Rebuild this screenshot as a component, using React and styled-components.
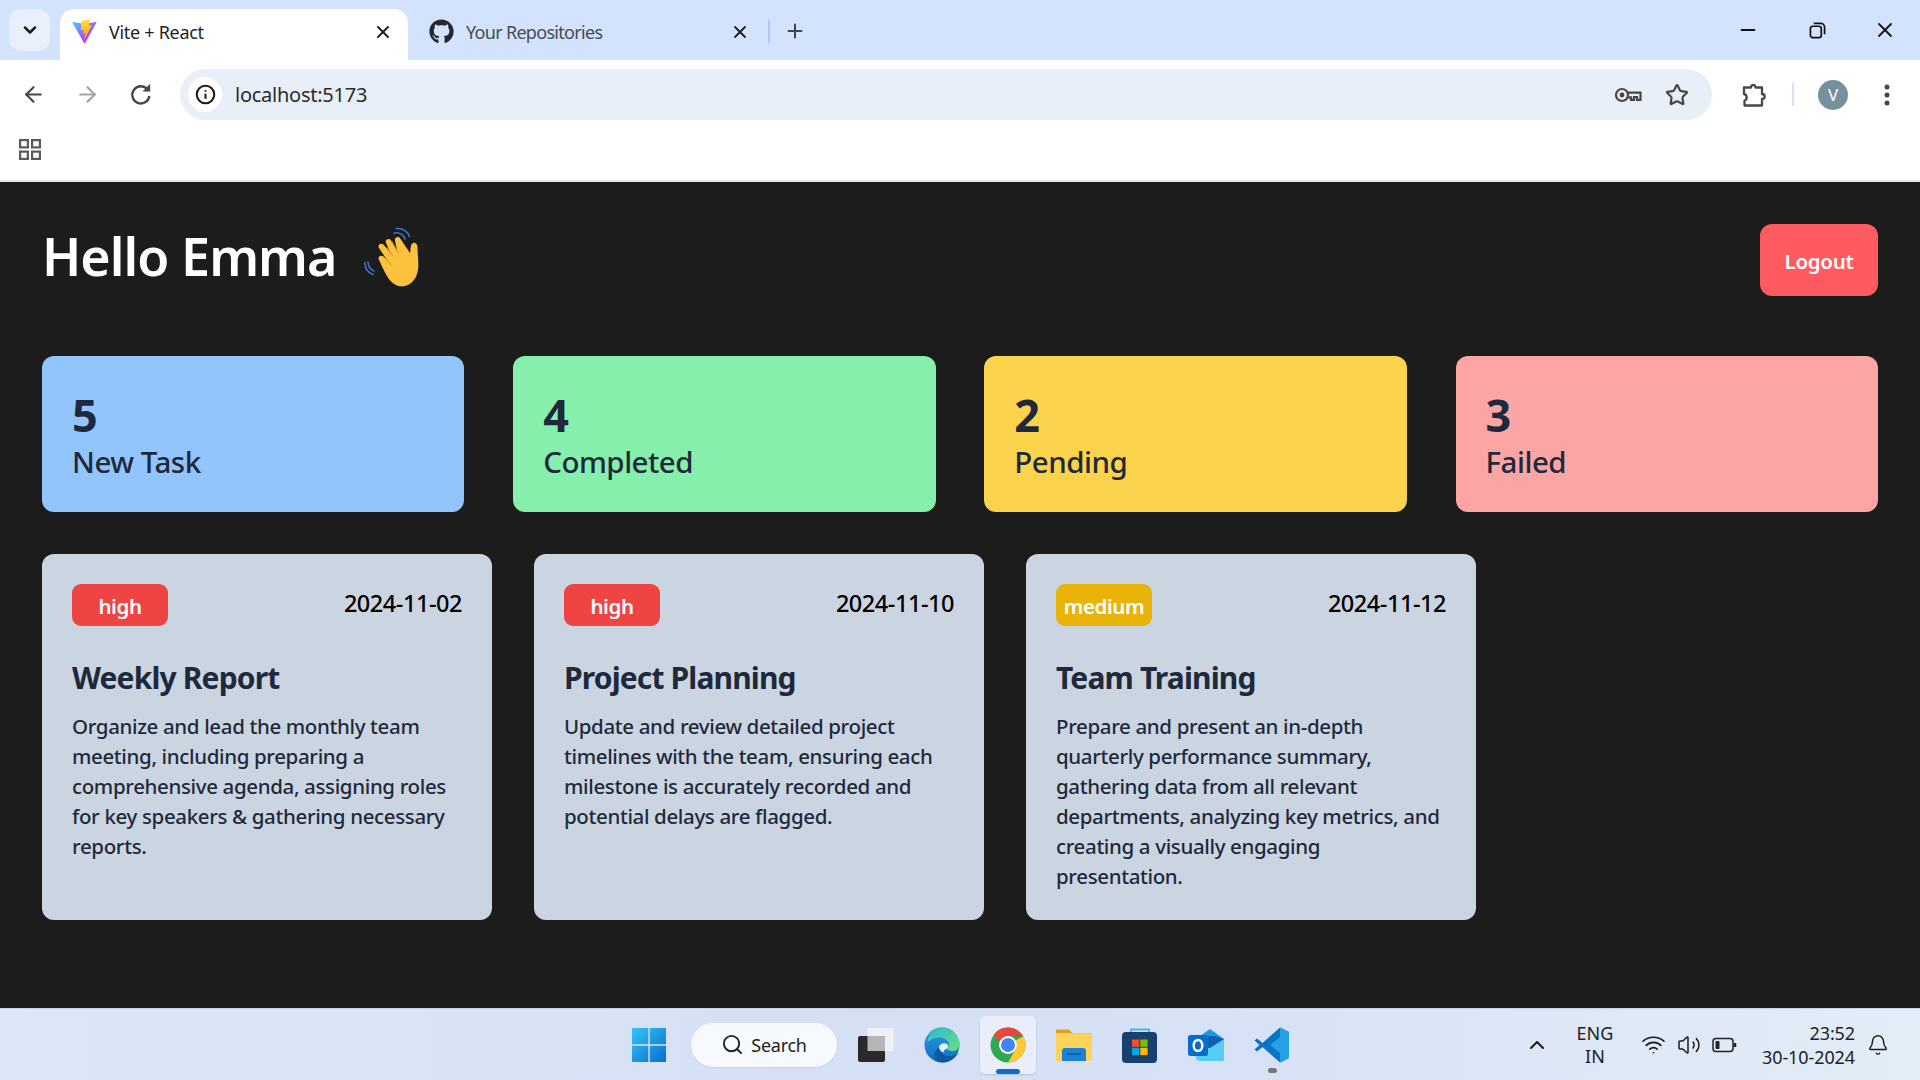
import React from 'react'
import styled, { createGlobalStyle } from 'styled-components'
import { FaGithub } from 'react-icons/fa'
import {
  ArrowLeft, ArrowRight, Info, Star, Plus, X, ChevronDown, ChevronUp,
  Minus, Search, Bell, Volume2, Wifi,
} from 'lucide-react'

const GlobalStyle = createGlobalStyle`
  html, body { margin: 0; padding: 0; height: 100%; }
  body { font-family: "Noto Sans", "Open Sans", sans-serif; overflow: hidden; }
  * { box-sizing: border-box; }
`

const Screen = styled.div`
  width: 1920px;
  height: 1080px;
  display: flex;
  flex-direction: column;
`

/* browser chrome */
const TabStrip = styled.div`
  height: 60px;
  flex: none;
  background: #d3e3fd;
  display: flex;
  align-items: flex-end;
  padding-left: 9px;
`
const TabMenu = styled.div`
  width: 41px;
  height: 42px;
  margin-bottom: 9px;
  margin-right: 10px;
  background: #e9f0fb;
  border-radius: 12px;
  display: flex;
  align-items: center;
  justify-content: center;
  color: #1f1f1f;
`
const Tab = styled.div`
  width: ${p => p.$w}px;
  height: 51px;
  padding: 0 ${p => p.$pr}px 6px ${p => p.$pl}px;
  display: flex;
  align-items: center;
  border-radius: 14px 14px 0 0;
  background: ${p => (p.$active ? '#fff' : 'transparent')};
  color: ${p => (p.$active ? '#1f1f1f' : '#474b50')};
  font-size: 18px;
  letter-spacing: ${p => (p.$active ? '-0.3px' : '-0.7px')};
  svg.close { margin-left: auto; color: #1f1f1f; flex: none; }
`
const TabTitle = styled.span`
  margin-left: 12px;
`
const TabDivider = styled.div`
  width: 2px;
  height: 23px;
  background: #a8c7fa;
  margin: 0 0 17px 0;
  align-self: flex-end;
`
const NewTab = styled.div`
  margin: 0 0 18px 14px;
  color: #444;
  display: flex;
`
const WindowButtons = styled.div`
  margin-left: auto;
  align-self: flex-start;
  display: flex;
  align-items: center;
  padding: 18px 23px 0 0;
  color: #111;
`
const WindowMin = styled.span`
  display: flex;
  margin-right: 50px;
`
const WindowRestore = styled.span`
  display: flex;
  margin-right: 47px;
`
const Toolbar = styled.div`
  height: 60px;
  flex: none;
  background: #fff;
  border-radius: 14px 14px 0 0;
  display: flex;
  align-items: center;
  color: #474747;
`
const NavIcons = styled.div`
  display: flex;
  gap: 29px;
  padding: 9px 0 0 21px;
  width: 180px;
`
const NavIcon = styled.span`
  display: flex;
  color: ${p => (p.$dim ? '#a0a3a6' : '#474747')};
`
const AddressBar = styled.div`
  width: 1532px;
  height: 51px;
  margin-top: 9px;
  border-radius: 26px;
  background: #e9eff9;
  display: flex;
  align-items: center;
  padding: 0 23px 0 8px;
`
const SiteInfo = styled.div`
  width: 34px;
  height: 35px;
  border-radius: 50%;
  background: #fff;
  display: flex;
  align-items: center;
  justify-content: center;
  color: #1f1f1f;
`
const Url = styled.span`
  margin-left: 13px;
  font-size: 20px;
  letter-spacing: -0.25px;
  color: #2b2b2b;
  margin-right: auto;
`
const AddressActions = styled.div`
  display: flex;
  align-items: center;
  gap: 23px;
  color: #474747;
`
const ToolbarEnd = styled.div`
  display: flex;
  align-items: center;
  flex: 1;
  padding-left: 29px;
  margin-top: 9px;
`
const ToolDivider = styled.div`
  width: 2px;
  height: 23px;
  margin: 0 24px 0 25px;
  background: #d3e3fd;
`
const Avatar = styled.div`
  width: 30px;
  height: 30px;
  border-radius: 50%;
  background: #78909c;
  color: #fff;
  font-size: 17px;
  display: flex;
  align-items: center;
  justify-content: center;
  margin-right: 36px;
`
const MenuDots = styled.svg`
  width: 6px;
  height: 22px;
  flex: none;
`
const Bookmarks = styled.div`
  height: 62px;
  flex: none;
  background: #fff;
  border-bottom: 2px solid #e3e3e3;
  padding: 19px 0 0 19px;
  display: flex;
  align-items: flex-start;
`

/* the app */
const Page = styled.main`
  flex: 1;
  min-height: 0;
  background: #1c1c1c;
  padding: 42px 42px 0;
`
const Header = styled.header`
  display: flex;
  align-items: flex-start;
  justify-content: space-between;
  height: 132px;
`
const Hello = styled.h1`
  margin: 0;
  color: #fff;
  font-size: 52px;
  line-height: 64px;
  font-weight: 600;
  letter-spacing: -0.95px;
  display: flex;
  align-items: center;
`
const Logout = styled.button`
  width: 118px;
  height: 72px;
  padding: 2px 0 0;
  border: 0;
  border-radius: 12px;
  background: #ff5a5f;
  color: #fff;
  font: 600 20.5px/70px "Noto Sans", sans-serif;
  letter-spacing: -0.3px;
`
const Stats = styled.section`
  display: grid;
  grid-template-columns: repeat(4, 1fr);
  column-gap: 48.7px;
`
const Stat = styled.div`
  height: 156px;
  border-radius: 12px;
  padding: 31px 30px 0;
  background: ${p => p.$bg};
  color: #1e293b;
`
const StatCount = styled.div`
  font-size: 45px;
  line-height: 56px;
  font-weight: 700;
`
const StatLabel = styled.div`
  font-size: 29.5px;
  line-height: 38px;
  font-weight: 500;
  letter-spacing: -0.5px;
`
const Tasks = styled.section`
  display: flex;
  gap: 42px;
  margin-top: 42px;
`
const TaskCard = styled.article`
  width: 450px;
  height: 366px;
  border-radius: 12px;
  background: #cbd5e1;
  padding: 30px;
`
const TaskTop = styled.div`
  display: flex;
  align-items: flex-start;
  justify-content: space-between;
`
const Priority = styled.span`
  width: 96px;
  height: 42px;
  padding-top: 1px;
  border-radius: 9px;
  background: ${p => p.$bg};
  color: #fff;
  font-size: 20.5px;
  font-weight: 600;
  letter-spacing: -0.4px;
  display: flex;
  align-items: center;
  justify-content: center;
`
const TaskDate = styled.span`
  font-size: 23.5px;
  line-height: 38px;
  font-weight: 500;
  letter-spacing: -0.45px;
  color: #000;
`
const TaskTitle = styled.h2`
  margin: 31px 0 0;
  font-size: 30px;
  line-height: 42px;
  font-weight: 700;
  letter-spacing: -0.85px;
  color: #1e293b;
`
const TaskText = styled.p`
  margin: 12px 0 0;
  font-size: 20.5px;
  line-height: 30px;
  font-weight: 500;
  letter-spacing: -0.36px;
  color: #1e293b;
`

/* windows taskbar */
const Taskbar = styled.footer`
  height: 72px;
  flex: none;
  border-top: 1px solid #c9d3e6;
  background: linear-gradient(90deg, #dbe7f7 0%, #d6e0f5 45%, #d8e2f6 65%, #e3edf7 100%);
  display: flex;
  align-items: center;
`
const TaskbarApps = styled.div`
  display: flex;
  align-items: center;
  margin-left: 631px;
  height: 100%;
  flex: none;
`
const SearchPill = styled.div`
  width: 146px;
  height: 44px;
  margin: 0 6px 0 24px;
  border-radius: 22px;
  background: #f6f9fe;
  box-shadow: 0 1px 1px rgba(60, 80, 130, 0.12);
  display: flex;
  align-items: center;
  justify-content: center;
  gap: 7px;
  font-size: 18px;
  letter-spacing: -0.25px;
  color: #222;
`
const AppSlot = styled.div`
  width: 66px;
  height: 100%;
  flex: none;
  display: flex;
  align-items: center;
  justify-content: center;
  position: relative;
`
const OpenBack = styled.span`
  position: absolute;
  left: 5px;
  right: 5px;
  top: 7px;
  bottom: 6px;
  border-radius: 5px;
  background: #e9eefa;
  box-shadow: 0 1px 2px rgba(0, 0, 0, 0.15);
`
const RunningBar = styled.span`
  position: absolute;
  bottom: 6px;
  left: 21px;
  width: 24px;
  height: 5px;
  border-radius: 3px;
  background: #0b6fce;
`
const RunningDot = styled.span`
  position: absolute;
  bottom: 7px;
  left: 29px;
  width: 9px;
  height: 5px;
  border-radius: 3px;
  background: #777;
`
const AppIcon = styled.svg`
  width: 36px;
  height: 36px;
  position: relative;
  flex: none;
`
const Tray = styled.div`
  margin-left: auto;
  display: flex;
  align-items: center;
  color: #1c1c1c;
  padding-right: 31px;
`
const Lang = styled.div`
  width: 50px;
  margin-left: 21px;
  text-align: center;
  font-size: 18px;
  line-height: 23px;
  color: #222;
`
const TrayIcons = styled.div`
  display: flex;
  align-items: center;
  gap: 11px;
  margin-left: 21px;
`
const Clock = styled.div`
  width: 118px;
  text-align: right;
  font-size: 18px;
  line-height: 24px;
  letter-spacing: -0.1px;
  color: #222;
`
const BellSlot = styled.div`
  display: flex;
  margin-left: 12px;
`

const ViteLogo = () => (
  <svg width="25" height="25" viewBox="0 0 410 404" style={{ flex: 'none' }}>
    <defs>
      <linearGradient id="vitea" x1="6" y1="33" x2="235" y2="344" gradientUnits="userSpaceOnUse">
        <stop stopColor="#41D1FF" />
        <stop offset="1" stopColor="#BD34FE" />
      </linearGradient>
      <linearGradient id="viteb" x1="194" y1="8" x2="236" y2="292" gradientUnits="userSpaceOnUse">
        <stop stopColor="#FFEA83" />
        <stop offset=".08" stopColor="#FFDD35" />
        <stop offset="1" stopColor="#FFA800" />
      </linearGradient>
    </defs>
    <path fill="url(#vitea)" d="M399.6 59.5 215 389.7c-3.8 6.8-13.6 6.8-17.5.1L9.3 59.5c-4.2-7.4 2.1-16.4 10.5-14.9l184.8 33c1.2.2 2.4.2 3.6 0l180.9-33c8.4-1.5 14.8 7.4 10.5 14.9Z" />
    <path fill="url(#viteb)" d="M292.9 1.6 156.4 28.3c-2.2.4-3.9 2.3-4 4.6l-8.4 142.1c-.2 3.3 2.9 5.9 6.1 5.2l38-8.8c3.6-.8 6.8 2.3 6.1 5.9l-11.3 55.3c-.8 3.7 2.7 6.9 6.3 5.8l23.5-7.1c3.6-1.1 7.1 2.1 6.3 5.8l-18 87c-1.1 5.4 6.1 8.4 9.1 3.7l2-3.1 111.3-222.2c1.9-3.7-1.3-8-5.4-7.2l-39.2 7.6c-3.7.7-6.8-2.7-5.8-6.3l25.6-88.7c1-3.7-2.2-7.1-5.9-6.4Z" />
  </svg>
)

const RestoreIcon = () => (
  <svg width="17" height="17" viewBox="0 0 18 18" fill="none" stroke="currentColor" strokeWidth="1.8">
    <rect x="1.5" y="4.5" width="11.5" height="12" rx="2.5" />
    <path d="M5 1.5h7.5a4 4 0 0 1 4 4V13" />
  </svg>
)

const ReloadIcon = () => (
  <svg width="24" height="24" viewBox="0 0 24 24" fill="none">
    <path d="M18.600 7.500A8.600 8.600 0 1 0 20.400 14" stroke="#474747" strokeWidth="2.300" />
    <path d="M13.500 9.500H21.200V1.800Z" fill="#474747" />
  </svg>
)

const KeyIcon = () => (
  <svg width="28" height="16" viewBox="0 0 28 16" fill="none" stroke="#474747" strokeWidth="2.2">
    <circle cx="8" cy="8" r="6" />
    <circle cx="8" cy="8" r="2.4" fill="#474747" stroke="none" />
    <path d="M14 5.600h12.500v7.200h-3.500V10h-3v2.800h-3V10.400H14" />
  </svg>
)

const PuzzleIcon = () => (
  <svg width="26" height="26" viewBox="0 0 26 26" fill="none" stroke="#474747" strokeWidth="2.3" strokeLinejoin="round">
    <path d="M3 5.500h7c.2-3.600 4.300-3.600 4.500 0H21v6.500c3.600.2 3.600 4.800 0 5v6.500H3.500v-5c3-.7 3-5.800-.5-6.500Z" />
  </svg>
)

const GridIcon = () => (
  <svg width="22" height="21" viewBox="0 0 22 21" fill="none" stroke="#5a5a5a" strokeWidth="2.200">
    <rect x="1.100" y="1.100" width="7.800" height="7.300" />
    <rect x="13.100" y="1.100" width="7.800" height="7.300" />
    <rect x="1.100" y="12.600" width="7.800" height="7.300" />
    <rect x="13.100" y="12.600" width="7.800" height="7.300" />
  </svg>
)

const HandIcon = () => (
  <svg width="56" height="60" viewBox="0 0 56 60" style={{ marginLeft: 27, marginTop: 1 }}>
    <g fill="none" stroke="#3e74c9" strokeWidth="1.6" strokeLinecap="round">
      <path d="M30 6c5-1 9 1 11 6" />
      <path d="M32 1.500c6-.5 11 2 13.500 8" />
      <path d="M4 35c0 4 2 7 6 9" />
      <path d="M.8 35.500c0 6 3 10 8.200 12" />
    </g>
    <path fill="#fcc13d" d="M15 33c-2-3 2-6 5-3l3 3-8-12c-2-3 2-6 5-3l7 9-5-11c-1.500-3.500 3-5.500 5-2.500l6 10-2-10c-.5-4 4-4.500 5.500-1.500L46 26c1-4 0-8 3-10 3-1 4.500 1.500 4.500 4.500 0 10 2.500 19-1 28-4 10-15 14-23 8-6-4-10-14-14.500-23.500Z" />
    <g fill="none" stroke="#e2992a" strokeWidth="1.2" strokeLinecap="round">
      <path d="M23 33l4 5" />
      <path d="M23 21l6 8" />
      <path d="M28 15l6 11" />
    </g>
  </svg>
)

const WinLogo = () => (
  <AppIcon viewBox="0 0 36 36">
    <defs>
      <linearGradient id="wina" x1="0" y1="0" x2="1" y2="1">
        <stop stopColor="#35c3f4" />
        <stop offset="1" stopColor="#0a6fd0" />
      </linearGradient>
    </defs>
    <path fill="url(#wina)" d="M1 1h16.300v16.300H1zM18.700 1H35v16.300H18.700zM1 18.700h16.300V35H1zM18.700 18.700H35V35H18.700z" />
  </AppIcon>
)

const TaskViewIcon = () => (
  <AppIcon viewBox="0 0 36 36">
    <rect x="9.500" y="1" width="26" height="23" rx="1" fill="#eef0f6" />
    <rect x="0" y="9" width="27" height="26" rx="2" fill="#2a2a2a" />
    <rect x="9.500" y="9" width="17.500" height="15" fill="#b5b5b5" />
  </AppIcon>
)

const EdgeIcon = () => (
  <AppIcon viewBox="0 0 36 36">
    <defs>
      <linearGradient id="edgea" x1="0" y1="0" x2="1" y2="1">
        <stop stopColor="#2fb6d6" />
        <stop offset="1" stopColor="#6be27a" />
      </linearGradient>
      <linearGradient id="edgeb" x1="0" y1="0" x2="0" y2="1">
        <stop stopColor="#2a9be2" />
        <stop offset="1" stopColor="#0f6fc4" />
      </linearGradient>
    </defs>
    <circle cx="18" cy="18" r="17.500" fill="url(#edgeb)" />
    <path fill="url(#edgea)" d="M18 .5c10 0 17.500 7.500 17.500 16.500 0 4.500-3 7-7 7-3 0-5-1-5.500-2.500 2-1.500 2.500-3.500 1.500-6-1.500-3-5-5-9-5S6 12 3.500 16C3.500 8 9 .5 18 .5Z" />
    <path fill="#0c5a9e" d="M15 20c0 6 6 10 13 9 2 0 5-2 6.500-4-2.500 6-9 10.500-15 10.500-2.500 0-5-.5-7-2-2-2-3-5-1-9 .7-1.500 2-3.500 3.500-4.500Z" />
    <path fill="#e3f3fb" d="M15 20c1-3.500 5-4.500 8-3 1.500 1 1.500 3.500 0 4.500-2 1-3.500 1.500-3.500 4-2.500-1-4.500-3-4.500-5.500Z" />
  </AppIcon>
)

const ChromeIcon = () => (
  <AppIcon viewBox="0 0 36 36">
    <circle cx="18" cy="18" r="17.500" fill="#2da94f" />
    <path fill="#e8453c" d="M18 .5a17.500 17.500 0 0 1 15.200 8.750H18a8.800 8.800 0 0 0-8.200 5.500L3.600 8.200A17.500 17.500 0 0 1 18 .5Z" />
    <path fill="#fcc934" d="M33.200 9.250A17.500 17.500 0 0 1 18 35.500l7.600-13A8.800 8.800 0 0 0 25.700 13.500Z" />
    <circle cx="18" cy="18" r="9" fill="#fff" />
    <circle cx="18" cy="18" r="7" fill="#4285f4" />
  </AppIcon>
)

const FolderIcon = () => (
  <AppIcon viewBox="0 0 36 36">
    <path fill="#d9a21b" d="M0 2.500h13l4 4h19V10H0z" />
    <path fill="#fcd45a" d="M0 6h14l3 .5h19V34H0z" />
    <path fill="#1c82d6" d="M6 24a3 3 0 0 1 3-3h18a3 3 0 0 1 3 3v10H6z" />
    <path fill="#0c5fa8" d="M11 26h14v2H11z" />
  </AppIcon>
)

const StoreIcon = () => (
  <AppIcon viewBox="0 0 36 36">
    <path fill="none" stroke="#4fb2e8" strokeWidth="2" d="M9 8V2.500h18V8" />
    <rect x="0" y="5" width="35" height="31" rx="4" fill="#17406f" />
    <path fill="#f25022" d="M10 12.500h7.300v7.300H10z" />
    <path fill="#7fba00" d="M18.300 12.500h7.300v7.300h-7.300z" />
    <path fill="#00a4ef" d="M10 20.800h7.300v7.300H10z" />
    <path fill="#ffb900" d="M18.300 20.800h7.300v7.300h-7.300z" />
  </AppIcon>
)

const OutlookIcon = () => (
  <AppIcon viewBox="0 0 36 36">
    <path fill="#1a9ae0" d="M12 9 22 2l14 10v19a3 3 0 0 1-3 3H12z" />
    <path fill="#55cdf5" d="M8 28 36 12v19a3 3 0 0 1-3 3H12a4 4 0 0 1-4-3z" />
    <path fill="#0f5fb5" d="M18 9h9l9 3-14 9h-4z" />
    <rect x="0" y="8" width="20" height="21" rx="2.500" fill="#0a6cc9" />
    <ellipse cx="10" cy="18.500" rx="4.300" ry="5.600" fill="none" stroke="#fff" strokeWidth="2.500" />
  </AppIcon>
)

const VsCodeIcon = () => (
  <AppIcon viewBox="0 0 36 36">
    <path fill="#0a74c4" d="M26 .5 8.500 16 3 11.500.5 13.500 5.500 18 .5 22.500 3 24.500 8.500 20 26 35.500l9-4.500V5z" />
    <path fill="#25a0e6" d="M26 .5l9 4.500v26l-9 4.500V26l-10-8 10-8z" />
  </AppIcon>
)

const BatteryIcon = () => (
  <svg width="25" height="16" viewBox="0 0 25 16" fill="none" stroke="#222" strokeWidth="1.500">
    <rect x="1" y="1.500" width="20" height="13" rx="3" />
    <rect x="3.500" y="4" width="4" height="8" rx="1" fill="#222" stroke="none" />
    <path d="M23 6v4" strokeWidth="2.500" />
  </svg>
)

const stats = [
  { count: 5, label: 'New Task', bg: '#93c5fd' },
  { count: 4, label: 'Completed', bg: '#86efac' },
  { count: 2, label: 'Pending', bg: '#fcd34d' },
  { count: 3, label: 'Failed', bg: '#fca5a5' },
]

const tasks = [
  {
    priority: 'high',
    color: '#ef4444',
    date: '2024-11-02',
    title: 'Weekly Report',
    text: 'Organize and lead the monthly team meeting, including preparing a comprehensive agenda, assigning roles for key speakers & gathering necessary reports.',
  },
  {
    priority: 'high',
    color: '#ef4444',
    date: '2024-11-10',
    title: 'Project Planning',
    text: 'Update and review detailed project timelines with the team, ensuring each milestone is accurately recorded and potential delays are flagged.',
  },
  {
    priority: 'medium',
    color: '#eab308',
    date: '2024-11-12',
    title: 'Team Training',
    text: 'Prepare and present an in-depth quarterly performance summary, gathering data from all relevant departments, analyzing key metrics, and creating a visually engaging presentation.',
  },
]

export default function App() {
  return (
    <Screen>
      <GlobalStyle />
      <TabStrip>
        <TabMenu><ChevronDown size={20} strokeWidth={3} /></TabMenu>
        <Tab $active $w={348} $pl={12} $pr={15}>
          <ViteLogo />
          <TabTitle>Vite + React</TabTitle>
          <X className="close" size={20} strokeWidth={2.4} />
        </Tab>
        <Tab $w={360} $pl={21} $pr={18}>
          <FaGithub size={25} color="#24292f" />
          <TabTitle>Your Repositories</TabTitle>
          <X className="close" size={20} strokeWidth={2.2} />
        </Tab>
        <TabDivider />
        <NewTab><Plus size={22} strokeWidth={2.2} /></NewTab>
        <WindowButtons>
          <WindowMin><Minus size={22} strokeWidth={2.2} /></WindowMin>
          <WindowRestore><RestoreIcon /></WindowRestore>
          <X size={24} strokeWidth={1.8} />
        </WindowButtons>
      </TabStrip>
      <Toolbar>
        <NavIcons>
          <NavIcon><ArrowLeft size={25} /></NavIcon>
          <NavIcon $dim><ArrowRight size={25} /></NavIcon>
          <NavIcon><ReloadIcon /></NavIcon>
        </NavIcons>
        <AddressBar>
          <SiteInfo><Info size={21} strokeWidth={2.4} /></SiteInfo>
          <Url>localhost:5173</Url>
          <AddressActions>
            <KeyIcon />
            <Star size={24} strokeWidth={2.2} />
          </AddressActions>
        </AddressBar>
        <ToolbarEnd>
          <PuzzleIcon />
          <ToolDivider />
          <Avatar>V</Avatar>
          <MenuDots viewBox="0 0 6 22" fill="#474747">
            <circle cx="3" cy="3" r="2.500" />
            <circle cx="3" cy="11" r="2.500" />
            <circle cx="3" cy="19" r="2.500" />
          </MenuDots>
        </ToolbarEnd>
      </Toolbar>
      <Bookmarks><GridIcon /></Bookmarks>
      <Page>
        <Header>
          <Hello>Hello Emma<HandIcon /></Hello>
          <Logout>Logout</Logout>
        </Header>
        <Stats>
          {stats.map(s => (
            <Stat key={s.label} $bg={s.bg}>
              <StatCount>{s.count}</StatCount>
              <StatLabel>{s.label}</StatLabel>
            </Stat>
          ))}
        </Stats>
        <Tasks>
          {tasks.map(t => (
            <TaskCard key={t.title}>
              <TaskTop>
                <Priority $bg={t.color}>{t.priority}</Priority>
                <TaskDate>{t.date}</TaskDate>
              </TaskTop>
              <TaskTitle>{t.title}</TaskTitle>
              <TaskText>{t.text}</TaskText>
            </TaskCard>
          ))}
        </Tasks>
      </Page>
      <Taskbar>
        <TaskbarApps>
          <WinLogo />
          <SearchPill><Search size={23} strokeWidth={2} />Search</SearchPill>
          <AppSlot><TaskViewIcon /></AppSlot>
          <AppSlot><EdgeIcon /></AppSlot>
          <AppSlot><OpenBack /><ChromeIcon /><RunningBar /></AppSlot>
          <AppSlot><FolderIcon /></AppSlot>
          <AppSlot><StoreIcon /></AppSlot>
          <AppSlot><OutlookIcon /></AppSlot>
          <AppSlot><VsCodeIcon /><RunningDot /></AppSlot>
        </TaskbarApps>
        <Tray>
          <ChevronUp size={24} strokeWidth={2} />
          <Lang>ENG<br />IN</Lang>
          <TrayIcons>
            <Wifi size={25} strokeWidth={1.6} />
            <Volume2 size={24} strokeWidth={1.5} />
            <BatteryIcon />
          </TrayIcons>
          <Clock>23:52<br />30-10-2024</Clock>
          <BellSlot><Bell size={22} strokeWidth={1.6} /></BellSlot>
        </Tray>
      </Taskbar>
    </Screen>
  )
}
